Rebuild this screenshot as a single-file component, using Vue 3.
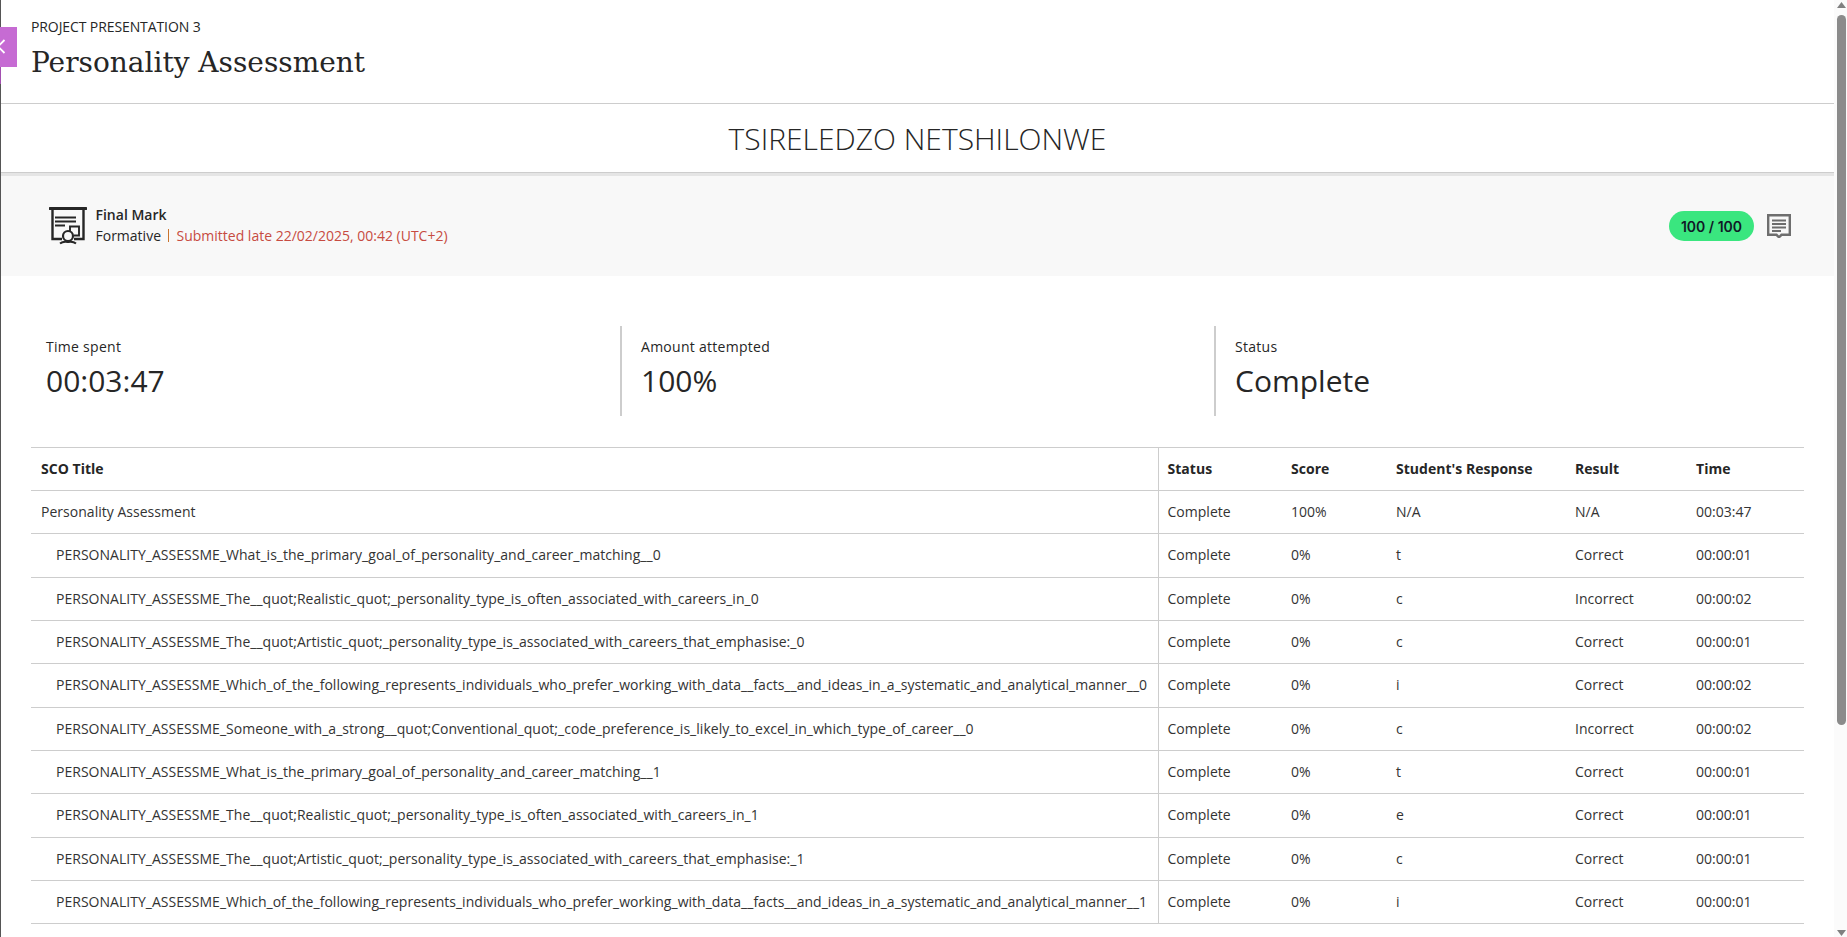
<script setup>
const P = 'PERSONALITY_ASSESSME_'
const goal = 'What_is_the_primary_goal_of_personality_and_career_matching__'
const real = 'The__quot;Realistic_quot;_personality_type_is_often_associated_with_careers_in_'
const art = 'The__quot;Artistic_quot;_personality_type_is_associated_with_careers_that_emphasise:_'
const which = 'Which_of_the_following_represents_individuals_who_prefer_working_with_data__facts__and_ideas_in_a_systematic_and_analytical_manner__'
const some = 'Someone_with_a_strong__quot;Conventional_quot;_code_preference_is_likely_to_excel_in_which_type_of_career__'
const rows = [
  [goal + '0', 't', 'Correct', '00:00:01'],
  [real + '0', 'c', 'Incorrect', '00:00:02'],
  [art + '0', 'c', 'Correct', '00:00:01'],
  [which + '0', 'i', 'Correct', '00:00:02'],
  [some + '0', 'c', 'Incorrect', '00:00:02'],
  [goal + '1', 't', 'Correct', '00:00:01'],
  [real + '1', 'e', 'Correct', '00:00:01'],
  [art + '1', 'c', 'Correct', '00:00:01'],
  [which + '1', 'i', 'Correct', '00:00:01']
].map(r => ({ title: P + r[0], response: r[1], result: r[2], time: r[3] }))
const stats = [
  { label: 'Time spent', value: '00:03:47' },
  { label: 'Amount attempted', value: '100%' },
  { label: 'Status', value: 'Complete' }
]
</script>

<template>
  <div class="page">
    <main class="main">
      <button class="tab" aria-label="Back">
        <svg width="17" height="40" viewBox="0 0 17 40"><path d="M4.500 13 -2 19.500 4.500 26" fill="none" stroke="#fff" stroke-width="1.800"/></svg>
      </button>
      <header class="head">
        <div class="kicker">PROJECT PRESENTATION 3</div>
        <h1>Personality Assessment</h1>
      </header>
      <div class="student">TSIRELEDZO NETSHILONWE</div>
      <section class="mark">
        <svg class="mark-icon" width="38" height="38" viewBox="0 0 38 38" fill="none" stroke="#262626">
          <path d="M1 1.500H37" stroke-width="3" stroke-linecap="round"/>
          <path d="M3.500 2V32H13M25 32H34.500V2" stroke-width="2.400"/>
          <path d="M6 10.500H27M6 14.500H27M6 18.500H16" stroke-width="1.900"/>
          <path d="M21 24V19.500H30V28.500H25" stroke-width="1.900"/>
          <circle cx="19" cy="29" r="5" stroke-width="2.200"/>
          <path d="M11 36.500C14 34 16 34.500 19 35C22 34.500 24 34 27 36.500" stroke-width="2"/>
        </svg>
        <div class="mark-text">
          <div class="mark-title">Final Mark</div>
          <div class="mark-sub"><span>Formative</span><i class="sep"></i><span class="late">Submitted late 22/02/2025, 00:42 (UTC+2)</span></div>
        </div>
        <div class="pill">100 / 100</div>
        <svg class="comment" width="24" height="24" viewBox="0 0 24 24" fill="none" stroke="#6e6e6e">
          <path d="M1.200 1.200H22.800V20.800H14.500L12 23.300L9.500 20.800H1.200Z" stroke-width="2.400"/>
          <path d="M5 6.500H19M5 10H19M5 13.500H19M5 17H14" stroke-width="1.900"/>
        </svg>
      </section>
      <section class="stats">
        <div v-for="s in stats" :key="s.label" class="stat">
          <div class="stat-label">{{ s.label }}</div>
          <div class="stat-value">{{ s.value }}</div>
        </div>
      </section>
      <table class="grid">
        <colgroup>
          <col class="c-title"><col class="c-status"><col class="c-score"><col class="c-resp"><col class="c-result"><col>
        </colgroup>
        <thead>
          <tr><th class="first">SCO Title</th><th>Status</th><th>Score</th><th>Student's Response</th><th>Result</th><th>Time</th></tr>
        </thead>
        <tbody>
          <tr>
            <td class="first">Personality Assessment</td><td>Complete</td><td>100%</td><td>N/A</td><td>N/A</td><td>00:03:47</td>
          </tr>
          <tr v-for="r in rows" :key="r.title">
            <td class="first sub">{{ r.title }}</td><td>Complete</td><td>0%</td><td>{{ r.response }}</td><td>{{ r.result }}</td><td>{{ r.time }}</td>
          </tr>
        </tbody>
      </table>
    </main>
    <aside class="scrollbar" aria-hidden="true">
      <svg class="arrow" width="9" height="6" viewBox="0 0 9 6"><path d="M4.500 0 9 6H0Z" fill="#808080"/></svg>
      <div class="thumb"></div>
      <svg class="arrow down" width="9" height="6" viewBox="0 0 9 6"><path d="M4.500 6 9 0H0Z" fill="#808080"/></svg>
    </aside>
  </div>
</template>

<style scoped>
.page {
  display: flex;
  height: 100vh;
  box-sizing: border-box;
  overflow: hidden;
  border-left: 1px solid #555;
  background: #fff;
  color: #262626;
  font-family: "Open Sans", sans-serif;
  font-size: 14px;
}
.main { flex: 1; min-width: 0; }
.scrollbar {
  flex: none;
  width: 13px;
  box-sizing: border-box;
  padding: 2px 1px 0 3px;
  background: #fbfbfb;
  display: flex;
  flex-direction: column;
  align-items: stretch;
}
.arrow { display: block; flex: none; }
.thumb {
  height: 710px;
  margin-top: 7px;
  border-radius: 5px;
  background: #8b8b8b;
}
.arrow.down { margin-top: auto; margin-bottom: 1px; }
.tab {
  position: absolute;
  left: 0;
  top: 27px;
  width: 17px;
  height: 40px;
  padding: 0;
  border: 0;
  background: #c66bd3;
  z-index: 2;
}
.tab svg { display: block; }
.tab::after {
  content: "";
  position: absolute;
  left: 0;
  top: 40px;
  width: 1px;
  height: 17px;
  background: #a24fb0;
}
.head {
  height: 103px;
  border-bottom: 1px solid #cdcdcd;
  padding-left: 30px;
  overflow: hidden;
}
.kicker {
  margin-top: 17px;
  line-height: 19px;
  font-size: 14px;
  letter-spacing: -0.1px;
}
h1 {
  margin: 8px 0 0;
  font-family: "DejaVu Serif", serif;
  font-size: 28px;
  line-height: 38px;
  font-weight: 400;
}
.student {
  height: 68px;
  line-height: 69px;
  text-align: center;
  font-size: 30px;
  font-weight: 300;
  border-bottom: 1px solid #cdcdcd;
}
.mark {
  display: flex;
  align-items: center;
  height: 100px;
  border-top: 3px solid #e5e5e5;
  background: #f8f8f8;
  padding: 0 43px 0 48px;
}
.mark-icon { flex: none; margin-top: -1px; }
.mark-text { margin-left: 8.500px; flex: 1; margin-top: -2px; }
.mark-title { font-weight: 600; line-height: 19px; }
.mark-sub { display: flex; align-items: center; margin-top: 2px; line-height: 19px; }
.sep { width: 1.500px; height: 13px; margin: 0 7.500px 0 6.500px; background: #c9742f; }
.late { color: #c74b41; }
.pill {
  width: 85px;
  height: 30px;
  border-radius: 15px;
  background: #3ae67f;
  color: #111827;
  font-family: Inter, sans-serif;
  font-weight: 600;
  font-size: 14px;
  line-height: 32px;
  text-align: center;
}
.comment { margin-left: 13px; }
.stats {
  display: grid;
  grid-template-columns: repeat(3, 594px);
  margin: 50px 0 0 25px;
  height: 90px;
}
.stat { padding-left: 20px; }
.stat + .stat { border-left: 2px solid #cdcdcd; padding-left: 19px; }
.stat-label { margin-top: 11px; line-height: 20px; font-weight: 500; letter-spacing: 0.28px; }
.stat-value { margin-top: 3px; font-size: 30px; line-height: 41px; }
.grid {
  width: 1773px;
  margin: 31px 30px 0;
  border-collapse: collapse;
  table-layout: fixed;
  border-top: 1px solid #cdcdcd;
}
.c-title { width: 1127px; }
.c-status { width: 123px; }
.c-score { width: 105px; }
.c-resp { width: 179px; }
.c-result { width: 121px; }
th, td {
  box-sizing: border-box;
  padding: 0 0 1px 10px;
  text-align: left;
  border-bottom: 1px solid #cdcdcd;
  white-space: nowrap;
  line-height: 19px;
  letter-spacing: 0.024px;
}
th { height: 43px; font-weight: 700; padding-bottom: 2px; }
td { height: 43.33px; color: #333; }
.first { border-right: 1px solid #cdcdcd; }
.first + th, .first + td { padding-left: 9px; }
.sub { padding-left: 25px; }
</style>

<style>
html, body { overflow: hidden; }
</style>
